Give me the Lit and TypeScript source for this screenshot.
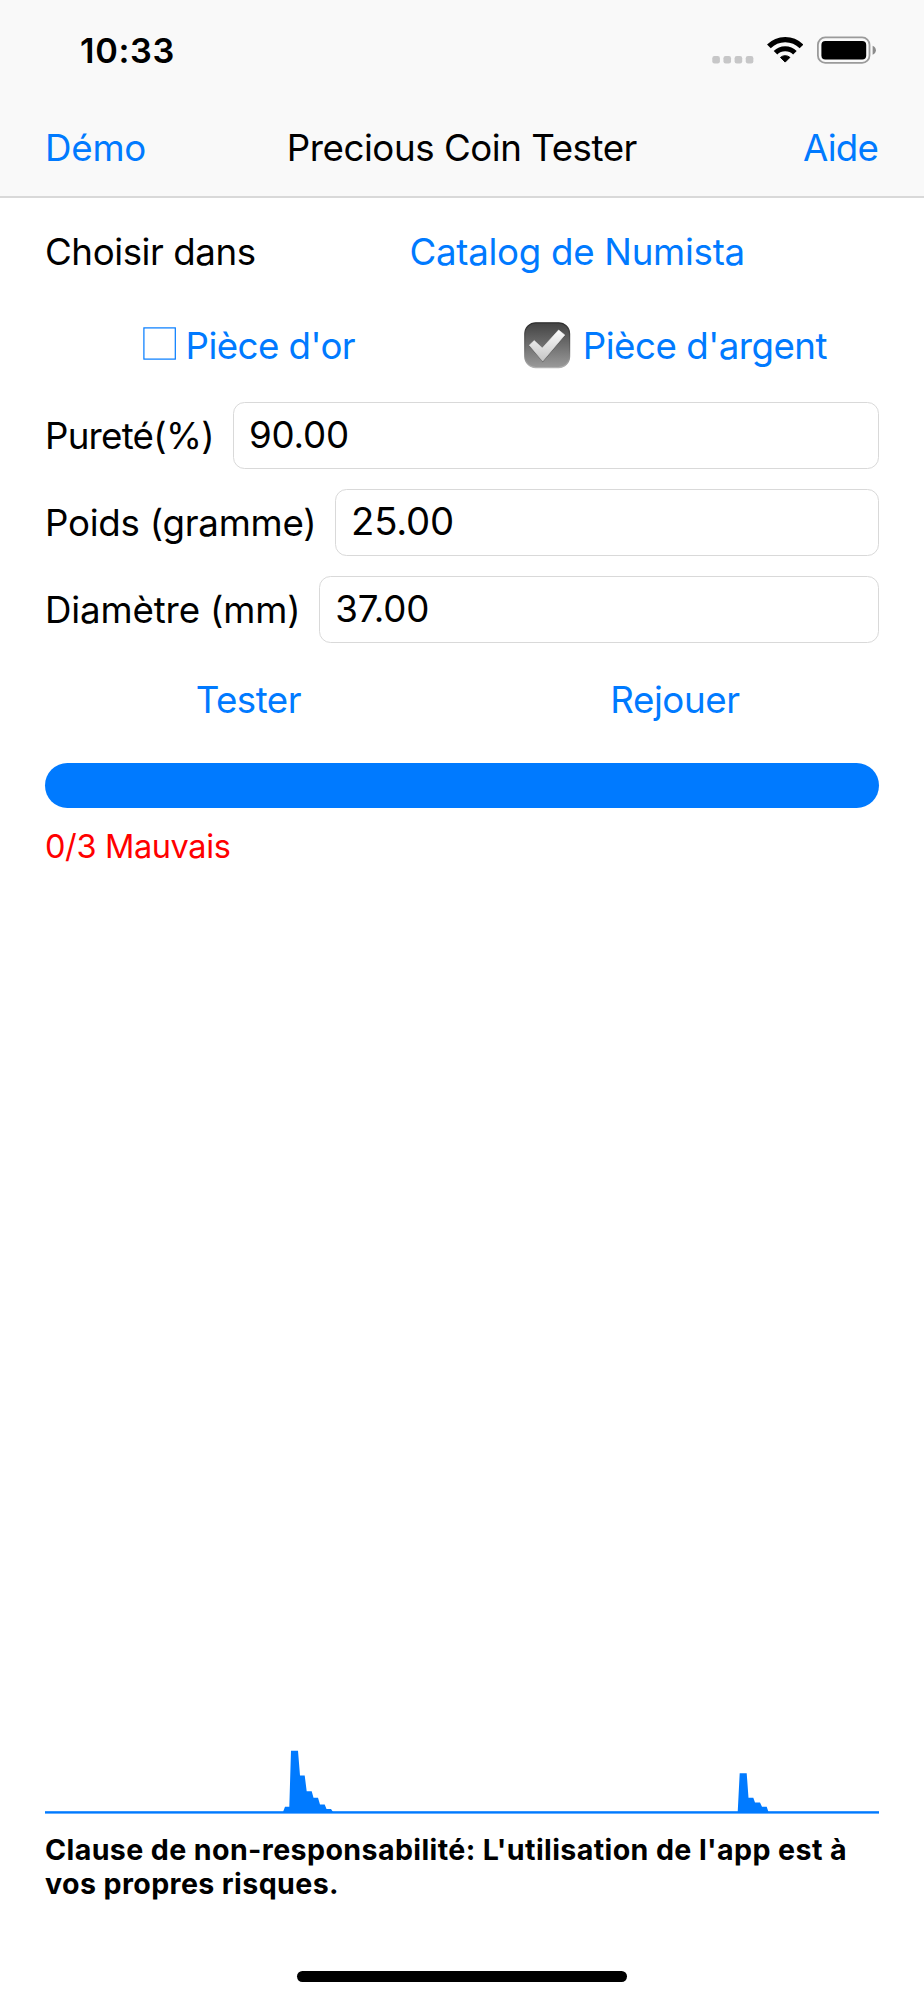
import { LitElement, html, svg, css } from 'lit';
import { customElement, property } from 'lit/decorators.js';

@customElement('status-bar')
export class StatusBar extends LitElement {
  static styles = css`
    :host { display: flex; justify-content: space-between; height: 98px; padding: 30px 47.5px 0 80px; box-sizing: border-box; }
    .time { font-size: 34.3px; font-weight: 600; line-height: 42px; letter-spacing: 0.65px; }
    .icons { display: flex; align-items: flex-start; padding-top: 6px; }
    .dots { margin: 20px 12.5px 0 0; }
    .wifi { margin-right: 13.5px; }
    svg { display: block; }
  `;
  render() {
    return html`
      <span class="time">10:33</span>
      <div class="icons">
        <svg class="dots" width="42" height="8" fill="#c7c7c8">
          ${[0, 1, 2, 3].map((i) => svg`<rect x=${i * 11.15 + 0.3} y="0" width="7.6" height="7.4" rx="2.2" />`)}
        </svg>
        <svg class="wifi" width="36.5" height="27" viewBox="0 -0.7 36.5 27" fill="none" stroke="#000">
          <path d="M1.9 9.7A22.8 22.8 0 0 1 34.5 9.7" stroke-width="5.2" />
          <path d="M8.5 16.1A13.6 13.6 0 0 1 27.9 16.1" stroke-width="5" />
          <path d="M18.2 25.4L13.5 20.7A7.3 7.3 0 0 1 22.9 20.7Z" fill="#000" stroke-width="1" stroke-linejoin="round" />
        </svg>
        <svg width="60" height="28" viewBox="0 -0.5 60 28">
          <rect x="0.9" y="0.9" width="51.6" height="25.4" rx="7.4" fill="none" stroke="#9b9b9b" stroke-width="1.8" />
          <rect x="4.4" y="4.4" width="44.8" height="18.6" rx="4" fill="#000" />
          <path d="M55.6 9.2V18.2C57.6 17.4 58.9 15.7 58.9 13.7S57.6 10 55.6 9.2Z" fill="#8c8c8c" />
        </svg>
      </div>`;
  }
}

@customElement('number-field')
export class NumberField extends LitElement {
  @property() label = '';
  @property() value = '';
  static styles = css`
    :host { display: flex; align-items: center; height: 66.7px; }
    label { flex: none; width: var(--label-width); white-space: nowrap; line-height: 44px; padding-top: 2px; }
    input { flex: 1; min-width: 0; height: 66.7px; box-sizing: border-box; margin: 0; padding: 0 14px 2px 14.8px;
      border: 1.2px solid #d9d9d9; border-radius: 11.5px; background: #fff; color: #000;
      font: inherit; font-size: var(--value-size, 36.7px); letter-spacing: var(--value-spacing, -0.15px); outline: none; }
  `;
  render() {
    return html`<label for="v">${this.label}</label><input id="v" .value=${this.value} />`;
  }
}

@customElement('wave-chart')
export class WaveChart extends LitElement {
  static styles = css`
    :host { display: block; height: 64px; }
    svg { display: block; }
  `;
  render() {
    return html`
      <svg width="834" height="64" viewBox="45 1750 834 64" fill="#007aff">
        <rect x="45" y="1811.2" width="834" height="2.4" />
        <path d="M283 1812L285 1806.7H289.3L291 1750.8H298L300 1775.5H304.7L306.7 1791.2H311.7L313.5 1797.8H318L320 1804.5H324.7L326.5 1809H331L333 1812Z" />
        <path d="M737.7 1812L739.7 1773.2H746.7L748.5 1797.8H753.3L755 1802.4H760L762 1806.8H766.7L768.5 1812Z" />
      </svg>`;
  }
}

@customElement('app-root')
export class AppRoot extends LitElement {
  static styles = css`
    :host { display: flex; flex-direction: column; height: 2000px; background: #fff; color: #000;
      font-family: Inter, "Liberation Sans", sans-serif; font-size: 36.7px; line-height: 44px; white-space: nowrap; }
    header { flex: none; height: 198px; box-sizing: border-box; background: #f9f9f9;
      border-bottom: 2px solid #d9d9d9; }
    nav { display: flex; padding: 28px 46px 0 45px; }
    a { color: #007aff; }
    .demo { width: 241.8px; letter-spacing: -0.23px; }
    .title { flex: 1; letter-spacing: -0.46px; }
    .aide { letter-spacing: -0.8px; }
    main { flex: 1; display: flex; flex-direction: column; padding: 32px 45px 0; }
    .source { display: flex; }
    .choose { width: 364.5px; letter-spacing: -0.43px; }
    .catalog { letter-spacing: -0.29px; }
    .metals { display: flex; margin-top: 50px; height: 44px; }
    .metal { display: flex; }
    .gold { width: 381px; padding-left: 98px; letter-spacing: -0.55px; }
    .gold svg { margin: 3px 9.5px 0 0; }
    .silver { letter-spacing: -0.5px; }
    .silver svg { margin: -2px 12.3px 0 0; }
    .fields { display: flex; flex-direction: column; gap: 20.3px; margin-top: 34px; }
    .purity { --label-width: 188.1px; letter-spacing: -0.75px; }
    .weight { --label-width: 290.2px; letter-spacing: -0.25px; --value-size: 38.3px; --value-spacing: -0.2px; }
    .diameter { --label-width: 274.4px; letter-spacing: -0.15px; }
    .actions { display: flex; margin-top: 35.3px; }
    .test { width: 414.6px; padding-left: 150.7px; letter-spacing: -0.52px; }
    .replay { letter-spacing: -0.42px; }
    .progress { height: 44.7px; margin-top: 41.2px; border-radius: 22.4px; background: #007aff; }
    .result { margin-top: 19px; color: #f00; font-size: 32.5px; line-height: 40px; letter-spacing: -0.38px; }
    wave-chart { margin-top: auto; }
    footer { flex: none; height: 186px; box-sizing: border-box; padding: 18.6px 45px 18.3px; display: flex;
      flex-direction: column; justify-content: space-between; }
    .legal { font-size: 28.6px; font-weight: 650; line-height: 34.7px; letter-spacing: 0.385px; }
    .home { align-self: center; width: 330px; height: 10.8px; border-radius: 5.4px; background: #000; }
  `;
  render() {
    return html`
      <header>
        <status-bar></status-bar>
        <nav>
          <a class="demo">Démo</a>
          <span class="title">Precious Coin Tester</span>
          <a class="aide">Aide</a>
        </nav>
      </header>
      <main>
        <div class="source">
          <span class="choose">Choisir dans</span>
          <a class="catalog">Catalog de Numista</a>
        </div>
        <div class="metals">
          <a class="metal gold">
            <svg width="33" height="33" fill="none" stroke="#007aff" stroke-width="1.2">
              <rect x="0.9" y="0.9" width="31.4" height="31.2" />
            </svg>
            <span>Pièce d'or</span>
          </a>
          <a class="metal silver">
            <svg width="46.5" height="46.5" viewBox="0 0 46.5 46.5">
              <defs>
                <linearGradient id="box" x1="0" y1="0" x2="0" y2="1">
                  <stop offset="0" stop-color="#434343" /><stop offset="1" stop-color="#9a9a9a" />
                </linearGradient>
                <linearGradient id="edge" x1="0" y1="0" x2="0" y2="1">
                  <stop offset="0" stop-color="#2e2e2e" /><stop offset="0.6" stop-color="#6a6a6a" /><stop offset="1" stop-color="#b2b2b2" />
                </linearGradient>
                <linearGradient id="tick" x1="0" y1="0" x2="0" y2="1">
                  <stop offset="0" stop-color="#fdfdfd" /><stop offset="1" stop-color="#c4c4c4" />
                </linearGradient>
              </defs>
              <rect x="0.8" y="0.8" width="44.8" height="44.8" rx="11" fill="url(#box)" stroke="url(#edge)" stroke-width="1.2" />
              <path d="M5.3 24.2L10.2 19.6L18.3 27.2L34.6 9L40.8 14L18.8 40.2Z" fill="#333" opacity="0.6" />
              <path d="M5.3 23.2L10.2 18.6L18.3 26L34.6 8L40.8 13L18.7 39.2Z" fill="url(#tick)" stroke="url(#tick)" stroke-width="0.6" stroke-linejoin="round" />
            </svg>
            <span>Pièce d'argent</span>
          </a>
        </div>
        <div class="fields">
          <number-field class="purity" label="Pureté(%)" value="90.00"></number-field>
          <number-field class="weight" label="Poids (gramme)" value="25.00"></number-field>
          <number-field class="diameter" label="Diamètre (mm)" value="37.00"></number-field>
        </div>
        <div class="actions">
          <a class="test">Tester</a>
          <a class="replay">Rejouer</a>
        </div>
        <div class="progress"></div>
        <div class="result">0/3 Mauvais</div>
        <wave-chart></wave-chart>
      </main>
      <footer>
        <div class="legal">Clause de non-responsabilité: L'utilisation de l'app est à<br />vos propres risques.</div>
        <div class="home"></div>
      </footer>`;
  }
}
